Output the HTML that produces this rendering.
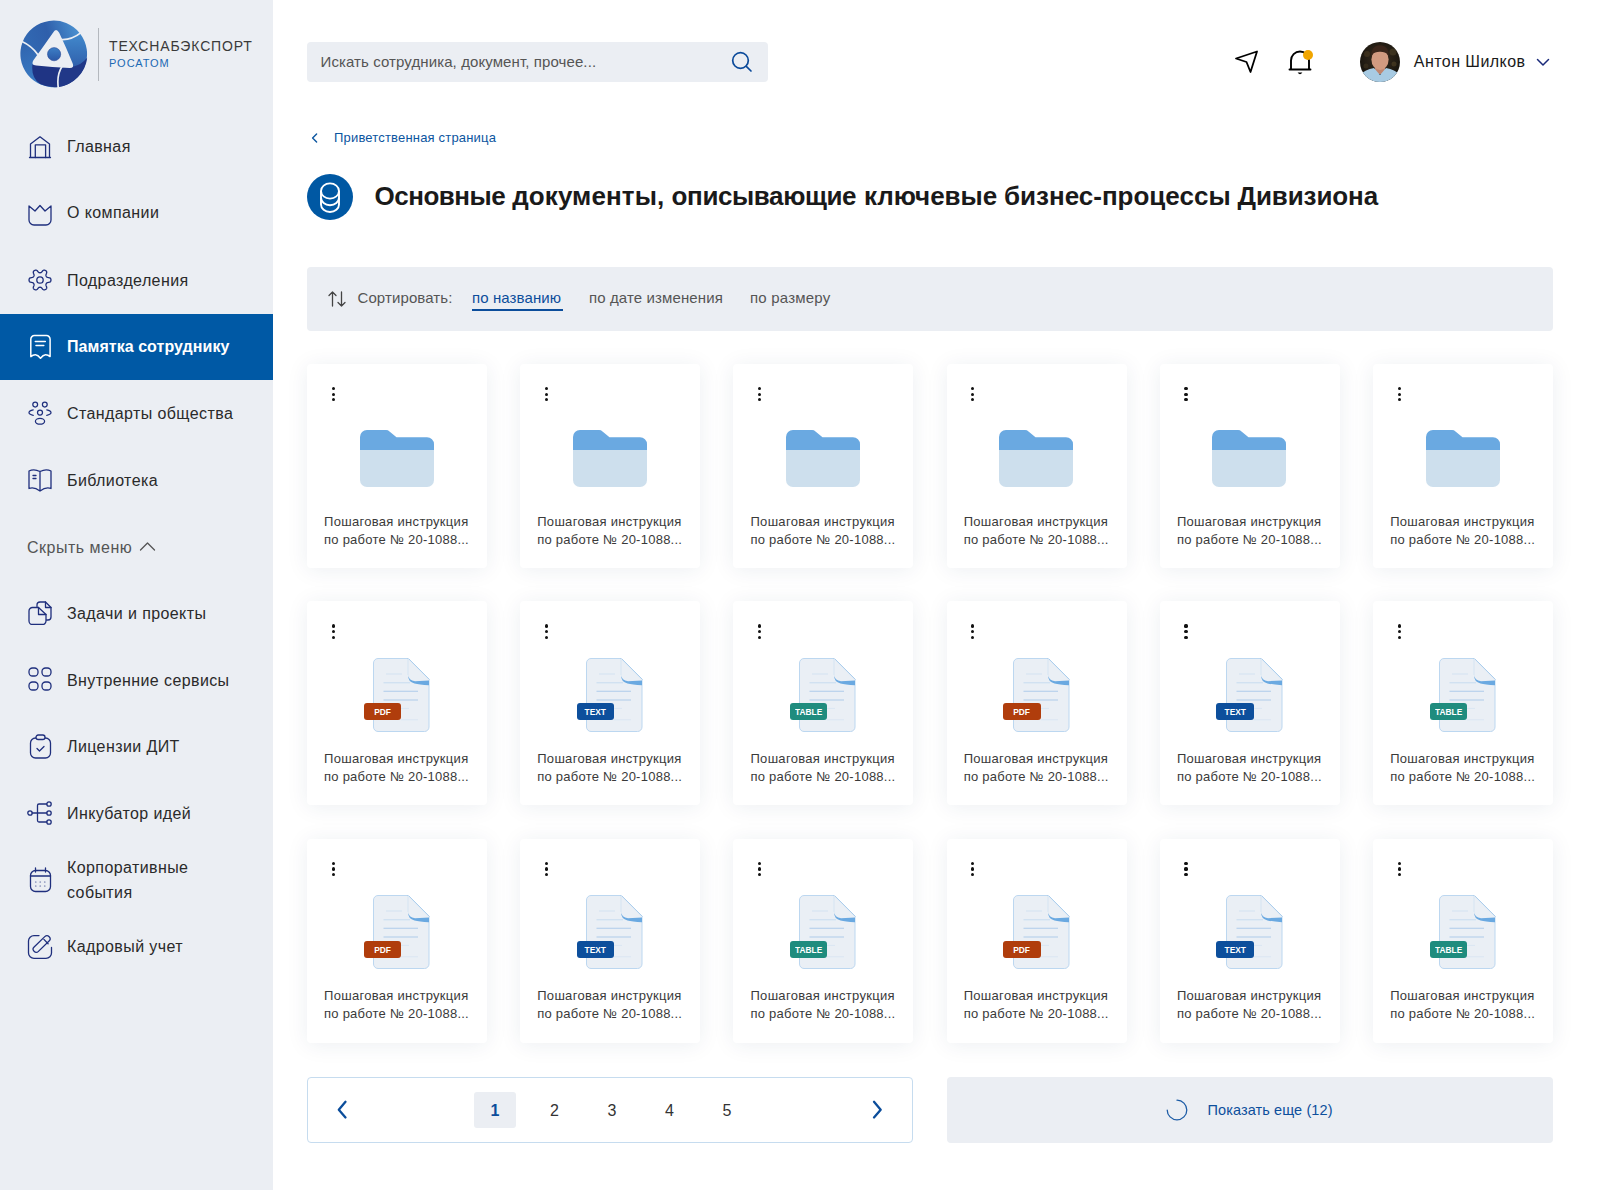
<!DOCTYPE html>
<html lang="ru"><head><meta charset="utf-8"><title>Памятка сотруднику</title>
<style>
html,body{margin:0;padding:0}
body{width:1600px;height:1190px;position:relative;overflow:hidden;background:#fff;font-family:"Liberation Sans", sans-serif}
#side{position:absolute;left:0;top:0;width:273px;height:1190px;background:#ebeef3}
.t{position:absolute;white-space:nowrap}
.card{position:absolute;height:204px;background:#fff;border-radius:4px;box-shadow:0 2px 22px rgba(30,50,90,0.08)}
.badge{position:absolute;left:56.5px;top:101.8px;width:37.5px;height:17px;border-radius:3px;text-align:center;line-height:17px}
.badge span{display:inline-block;vertical-align:top;line-height:17px;color:#fff;font-size:9.6px;font-weight:700;transform:scaleX(0.87)}
.dots{position:absolute;left:24.5px;top:23px;width:3px;height:15px}
.dots i{display:block;width:3.2px;height:3.2px;border-radius:50%;background:#111;margin-bottom:2.4px}
</style></head><body>
<div id="side"></div>
<div style="position:absolute;left:0;top:313.5px;width:273px;height:66px;background:#0059a5"></div>
<svg style="position:absolute;left:20.4px;top:20.3px" width="68" height="68" viewBox="-34 -34 68 68">
<defs>
<linearGradient id="ga" x1="0" y1="0.5" x2="1" y2="0.3"><stop offset="0" stop-color="#3169b3"/><stop offset="0.45" stop-color="#2f5fab"/><stop offset="1" stop-color="#4b93d2"/></linearGradient>
<linearGradient id="gb" x1="0" y1="0" x2="0" y2="1"><stop offset="0" stop-color="#428acd"/><stop offset="0.55" stop-color="#3265b0"/><stop offset="1" stop-color="#21388a"/></linearGradient>
<linearGradient id="gc" x1="0" y1="0" x2="0.3" y2="1"><stop offset="0" stop-color="#2f63ae"/><stop offset="1" stop-color="#3b7dc5"/></linearGradient>
<linearGradient id="gi" x1="0" y1="0" x2="0" y2="1"><stop offset="0" stop-color="#3d7fc6"/><stop offset="1" stop-color="#2b58a6"/></linearGradient>
</defs>
<path d="M0 0 L-17 0.7 Q-22 -8 -31.3 -12.3 A33.4 33.4 0 0 1 26 -20.6 Q17 -13.5 7.1 -14.6 Z" fill="url(#ga)"/>
<path d="M0 0 L7.1 -14.6 Q17 -13.5 26 -20.6 A33.4 33.4 0 0 1 4.3 33 Q2.5 21 7.5 13.3 Z" fill="url(#gb)"/>
<path d="M0 0 L7.5 13.3 Q2.5 21 4.3 33 A33.4 33.4 0 0 1 -31.3 -12.3 Q-22 -8 -17 0.7 Z" fill="url(#gc)"/>
<path d="M-21.6 10.4 Q-23 24 -13.9 29.9 A33.4 33.4 0 0 0 4.3 33 Q2.5 21 7.5 13.3 Z" fill="#1f3484"/>
<path d="M7.5 13.3 L19.8 12.5 Q27 11 33.2 3.8 A33.4 33.4 0 0 1 4.3 33 Q2.5 21 7.5 13.3 Z" fill="#213888"/>
<path d="M-1 -21.3 Q2 -26.8 5.2 -21.3 Q12 -7 18.6 9.3 Q20.8 14.2 15.6 14.1 Q-2 13 -17.8 11.4 Q-23.6 11 -20.6 6.3 Q-11 -7 -1 -21.3 Z" fill="#ebeef3"/>
<circle cx="0.1" cy="0.2" r="6.6" fill="url(#gi)" stroke="#233f8f" stroke-width="0.5"/>
<g stroke="#ebeef3" stroke-width="1.7" fill="none">
<path d="M6 -14.6 Q17 -13.5 27 -21.4"/>
<path d="M-16 0.7 Q-22 -8 -32 -12.6"/>
<path d="M8 12.5 Q2.5 21 4.3 34"/>
</g>
</svg>
<div style="position:absolute;left:98px;top:28px;width:1px;height:52.5px;background:#b4b8be"></div>
<div class="t" style="left:109px;top:37.75px;font-size:14px;line-height:16.8px;color:#3a3a3a;font-weight:400;letter-spacing:0.86px;">ТЕХСНАБЭКСПОРТ</div>
<div class="t" style="left:109px;top:56.59px;font-size:11px;line-height:13.2px;color:#1b69b3;font-weight:400;letter-spacing:1.0px;">РОСАТОМ</div>
<div class="t" style="left:67px;top:136.86px;font-size:16px;line-height:19.2px;color:#2a2a2a;font-weight:400;letter-spacing:0.4px;">Главная</div>
<div class="t" style="left:67px;top:203.36px;font-size:16px;line-height:19.2px;color:#2a2a2a;font-weight:400;letter-spacing:0.4px;">О компании</div>
<div class="t" style="left:67px;top:270.86px;font-size:16px;line-height:19.2px;color:#2a2a2a;font-weight:400;letter-spacing:0.4px;">Подразделения</div>
<div class="t" style="left:67px;top:337.36px;font-size:16px;line-height:19.2px;color:#ffffff;font-weight:700;letter-spacing:0.05px;">Памятка сотруднику</div>
<div class="t" style="left:67px;top:403.86px;font-size:16px;line-height:19.2px;color:#2a2a2a;font-weight:400;letter-spacing:0.4px;">Стандарты общества</div>
<div class="t" style="left:67px;top:470.86px;font-size:16px;line-height:19.2px;color:#2a2a2a;font-weight:400;letter-spacing:0.4px;">Библиотека</div>
<div class="t" style="left:67px;top:603.86px;font-size:16px;line-height:19.2px;color:#2a2a2a;font-weight:400;letter-spacing:0.4px;">Задачи и проекты</div>
<div class="t" style="left:67px;top:670.86px;font-size:16px;line-height:19.2px;color:#2a2a2a;font-weight:400;letter-spacing:0.4px;">Внутренние сервисы</div>
<div class="t" style="left:67px;top:737.36px;font-size:16px;line-height:19.2px;color:#2a2a2a;font-weight:400;letter-spacing:0.4px;">Лицензии ДИТ</div>
<div class="t" style="left:67px;top:803.86px;font-size:16px;line-height:19.2px;color:#2a2a2a;font-weight:400;letter-spacing:0.4px;">Инкубатор идей</div>
<div class="t" style="left:67px;top:857.86px;font-size:16px;line-height:19.2px;color:#2a2a2a;font-weight:400;letter-spacing:0.4px;">Корпоративные</div>
<div class="t" style="left:67px;top:882.86px;font-size:16px;line-height:19.2px;color:#2a2a2a;font-weight:400;letter-spacing:0.4px;">события</div>
<div class="t" style="left:67px;top:936.86px;font-size:16px;line-height:19.2px;color:#2a2a2a;font-weight:400;letter-spacing:0.4px;">Кадровый учет</div>
<svg style="position:absolute;left:28px;top:135px" width="24" height="24" viewBox="0 0 24 24" fill="none" stroke="#1f2f7d" stroke-width="1.3" stroke-linecap="round" stroke-linejoin="round"><path d="M1.5 22.5 H22.5 M2.5 22.5 V9 L12 1.8 L21.5 9 V22.5" /><path d="M7.3 22.5 V9.8 H17.6 V22.5"/></svg>
<svg style="position:absolute;left:28px;top:203px" width="24" height="24" viewBox="0 0 24 24" fill="none" stroke="#1f2f7d" stroke-width="1.3" stroke-linecap="round" stroke-linejoin="round"><path d="M1 3 L7 8 L12 2.5 L17 8 L23 3 V17 A5 5 0 0 1 18 22 H6 A5 5 0 0 1 1 17 Z"/></svg>
<svg style="position:absolute;left:27.9px;top:267.6px" width="24" height="24" viewBox="0 0 24 24" fill="none" stroke="#1f2f7d" stroke-width="1.3" stroke-linecap="round" stroke-linejoin="round"><path d="M22.95 12.00 L22.94 12.29 L22.91 12.57 L22.85 12.85 L22.77 13.13 L22.64 13.40 L22.45 13.65 L22.17 13.89 L21.80 14.08 L21.33 14.24 L20.79 14.36 L20.25 14.44 L19.78 14.53 L19.40 14.62 L19.12 14.73 L18.90 14.86 L18.74 15.00 L18.60 15.15 L18.48 15.30 L18.38 15.46 L18.28 15.62 L18.19 15.79 L18.10 15.96 L18.03 16.14 L17.97 16.33 L17.93 16.55 L17.92 16.80 L17.97 17.10 L18.08 17.47 L18.24 17.93 L18.43 18.43 L18.60 18.96 L18.70 19.45 L18.72 19.87 L18.66 20.22 L18.53 20.51 L18.36 20.76 L18.17 20.97 L17.95 21.16 L17.72 21.33 L17.48 21.48 L17.22 21.62 L16.96 21.73 L16.69 21.83 L16.40 21.89 L16.11 21.91 L15.79 21.87 L15.45 21.75 L15.10 21.53 L14.72 21.20 L14.36 20.79 L14.01 20.37 L13.70 20.00 L13.43 19.72 L13.19 19.53 L12.98 19.41 L12.77 19.33 L12.57 19.29 L12.38 19.27 L12.19 19.25 L12.00 19.25 L11.81 19.25 L11.62 19.27 L11.43 19.29 L11.23 19.33 L11.02 19.41 L10.81 19.53 L10.57 19.72 L10.30 20.00 L9.99 20.37 L9.64 20.79 L9.28 21.20 L8.90 21.53 L8.55 21.75 L8.21 21.87 L7.89 21.91 L7.60 21.89 L7.31 21.83 L7.04 21.73 L6.78 21.62 L6.53 21.48 L6.28 21.33 L6.05 21.16 L5.83 20.97 L5.64 20.76 L5.47 20.51 L5.34 20.22 L5.28 19.87 L5.30 19.45 L5.40 18.96 L5.57 18.43 L5.76 17.93 L5.92 17.47 L6.03 17.10 L6.08 16.80 L6.07 16.55 L6.03 16.33 L5.97 16.14 L5.90 15.96 L5.81 15.79 L5.72 15.62 L5.62 15.46 L5.52 15.30 L5.40 15.15 L5.26 15.00 L5.10 14.86 L4.88 14.73 L4.60 14.62 L4.22 14.53 L3.75 14.44 L3.21 14.36 L2.67 14.24 L2.20 14.08 L1.83 13.89 L1.55 13.65 L1.36 13.40 L1.23 13.13 L1.15 12.85 L1.09 12.57 L1.06 12.29 L1.05 12.00 L1.06 11.71 L1.09 11.43 L1.15 11.15 L1.23 10.87 L1.36 10.60 L1.55 10.35 L1.83 10.11 L2.20 9.92 L2.67 9.76 L3.21 9.64 L3.75 9.56 L4.22 9.47 L4.60 9.38 L4.88 9.27 L5.10 9.14 L5.26 9.00 L5.40 8.85 L5.52 8.70 L5.62 8.54 L5.72 8.38 L5.81 8.21 L5.90 8.04 L5.97 7.86 L6.03 7.67 L6.07 7.45 L6.08 7.20 L6.03 6.90 L5.92 6.53 L5.76 6.07 L5.57 5.57 L5.40 5.04 L5.30 4.55 L5.28 4.13 L5.34 3.78 L5.47 3.49 L5.64 3.24 L5.83 3.03 L6.05 2.84 L6.28 2.67 L6.52 2.52 L6.78 2.38 L7.04 2.27 L7.31 2.17 L7.60 2.11 L7.89 2.09 L8.21 2.13 L8.55 2.25 L8.90 2.47 L9.28 2.80 L9.64 3.21 L9.99 3.63 L10.30 4.00 L10.57 4.28 L10.81 4.47 L11.02 4.59 L11.23 4.67 L11.43 4.71 L11.62 4.73 L11.81 4.75 L12.00 4.75 L12.19 4.75 L12.38 4.73 L12.57 4.71 L12.77 4.67 L12.98 4.59 L13.19 4.47 L13.43 4.28 L13.70 4.00 L14.01 3.63 L14.36 3.21 L14.72 2.80 L15.10 2.47 L15.45 2.25 L15.79 2.13 L16.11 2.09 L16.40 2.11 L16.69 2.17 L16.96 2.27 L17.22 2.38 L17.48 2.52 L17.72 2.67 L17.95 2.84 L18.17 3.03 L18.36 3.24 L18.53 3.49 L18.66 3.78 L18.72 4.13 L18.70 4.55 L18.60 5.04 L18.43 5.57 L18.24 6.07 L18.08 6.53 L17.97 6.90 L17.92 7.20 L17.93 7.45 L17.97 7.67 L18.03 7.86 L18.10 8.04 L18.19 8.21 L18.28 8.38 L18.38 8.54 L18.48 8.70 L18.60 8.85 L18.74 9.00 L18.90 9.14 L19.12 9.27 L19.40 9.38 L19.78 9.47 L20.25 9.56 L20.79 9.64 L21.33 9.76 L21.80 9.92 L22.17 10.11 L22.45 10.35 L22.64 10.60 L22.77 10.87 L22.85 11.15 L22.91 11.43 L22.94 11.71 L22.95 12.00 Z"/><circle cx="12" cy="12" r="3.2"/></svg>
<svg style="position:absolute;left:29px;top:334px" width="24" height="26" viewBox="0 0 24 26" fill="none" stroke="#ffffff" stroke-width="1.5" stroke-linecap="round" stroke-linejoin="round"><path d="M1.8 5.2 A3.6 3.6 0 0 1 5.4 1.6 H17.5 A3.6 3.6 0 0 1 21.1 5.2 V22.6 Q19 20.6 16.5 20.7 Q14 20.9 11.5 24.3 Q9 20.9 6.5 20.7 Q4 20.6 1.8 22.6 Z"/><path d="M6.3 7.4 H16.3 M7 11.4 H14.8"/></svg>
<svg style="position:absolute;left:28px;top:401px" width="24" height="24" viewBox="0 0 24 24" fill="none" stroke="#1f2f7d" stroke-width="1.25" stroke-linecap="round" stroke-linejoin="round"><circle cx="7.2" cy="3.6" r="2.4"/><circle cx="16.8" cy="3.6" r="2.4"/><circle cx="12" cy="11.6" r="2.5"/><path d="M5.2 8.8 Q1 9.6 1 11.6 Q1 13.6 5.2 14.4 M18.8 8.8 Q23 9.6 23 11.6 Q23 13.6 18.8 14.4"/><ellipse cx="12" cy="20.3" rx="4.6" ry="2.9"/></svg>
<svg style="position:absolute;left:28px;top:468px" width="24" height="24" viewBox="0 0 24 24" fill="none" stroke="#1f2f7d" stroke-width="1.3" stroke-linecap="round" stroke-linejoin="round"><path d="M1 3 Q6 0.5 12 3.5 Q18 0.5 23 3 V20.5 Q18 18.5 12 23 Q6 18.5 1 20.5 Z M12 3.5 V23"/><path d="M5 7.5 H8 M5 10.5 H8"/></svg>
<div class="t" style="left:27px;top:537.86px;font-size:16px;line-height:19.2px;color:#555;font-weight:400;letter-spacing:0.5px;">Скрыть меню</div>
<svg style="position:absolute;left:139px;top:541px" width="17" height="11" viewBox="0 0 17 11" fill="none" stroke="#555" stroke-width="1.3" stroke-linecap="round" stroke-linejoin="round"><path d="M1.5 9 L8.5 2 L15.5 9"/></svg>
<svg style="position:absolute;left:28px;top:601px" width="24" height="24" viewBox="0 0 24 24" fill="none" stroke="#1f2f7d" stroke-width="1.3" stroke-linecap="round" stroke-linejoin="round"><path d="M9 5.5 L9 4 A3 3 0 0 1 12 1 H17.5 L23 6.5 V16 A3 3 0 0 1 20 19 H18.5"/><path d="M17.5 1 V6.5 H23"/><path d="M1 10 A3.5 3.5 0 0 1 4.5 6.5 H10.5 L18 13.5 V20 A3.5 3.5 0 0 1 14.5 23.5 H4.5 A3.5 3.5 0 0 1 1 20 Z"/><path d="M10.5 6.5 V13.5 H18"/></svg>
<svg style="position:absolute;left:28px;top:667px" width="24" height="24" viewBox="0 0 24 24" fill="none" stroke="#1f2f7d" stroke-width="1.3" stroke-linecap="round" stroke-linejoin="round"><rect x="1" y="1" width="9" height="8" rx="3.5"/><rect x="14" y="1" width="9" height="8" rx="3.5"/><rect x="1" y="15" width="9" height="8" rx="3.5"/><rect x="14" y="15" width="9" height="8" rx="3.5"/></svg>
<svg style="position:absolute;left:29px;top:734px" width="24" height="25" viewBox="0 0 24 25" fill="none" stroke="#1f2f7d" stroke-width="1.3" stroke-linecap="round" stroke-linejoin="round"><rect x="1.5" y="4" width="20" height="20" rx="5"/><rect x="7" y="1" width="9" height="4.5" rx="2.2" fill="#ebeef3"/><path d="M8 14.5 L10.5 17 L15 12.5"/></svg>
<svg style="position:absolute;left:27px;top:801px" width="26" height="24" viewBox="0 0 26 24" fill="none" stroke="#1f2f7d" stroke-width="1.3" stroke-linecap="round" stroke-linejoin="round"><circle cx="3" cy="12" r="2.2"/><circle cx="22" cy="3" r="2.2"/><circle cx="22" cy="12" r="2.2"/><circle cx="22" cy="21" r="2.2"/><path d="M5.2 12 H19.8 M19.8 3 H12 Q10.5 3 10.5 4.5 V19.5 Q10.5 21 12 21 H19.8"/></svg>
<svg style="position:absolute;left:29px;top:867px" width="24" height="26" viewBox="0 0 24 26" fill="none" stroke="#1f2f7d" stroke-width="1.3" stroke-linecap="round" stroke-linejoin="round"><rect x="1.5" y="3.5" width="20" height="21" rx="5"/><path d="M6.5 1 V5 M16.5 1 V5 M1.5 9 H21.5"/><path d="M6.5 15 H7 M11 15 H11.5 M15.5 15 H16 M6.5 19 H7 M11 19 H11.5 M15.5 19 H16" stroke-width="1.2" opacity="0.7"/></svg>
<svg style="position:absolute;left:27px;top:934px" width="26" height="26" viewBox="0 0 26 26" fill="none" stroke="#1f2f7d" stroke-width="1.3" stroke-linecap="round" stroke-linejoin="round"><path d="M12 1.6 H7 A5.5 5.5 0 0 0 1.5 7.1 V18.9 A5.5 5.5 0 0 0 7 24.4 H19 A5.5 5.5 0 0 0 24.5 18.9 V13.5"/><rect x="4.1" y="6.9" width="21" height="6.2" rx="3.1" transform="rotate(-44 14.6 10)"/><path d="M16.9 5.4 L21.1 9.8"/></svg>
<div style="position:absolute;left:307px;top:41.5px;width:461px;height:40px;background:#ebeef3;border-radius:4px"></div>
<div class="t" style="left:320.5px;top:52.80px;font-size:15px;line-height:18.0px;color:#555;font-weight:400;letter-spacing:0.1px;">Искать сотрудника, документ, прочее...</div>
<svg style="position:absolute;left:730px;top:50px" width="24" height="24" viewBox="0 0 24 24" fill="none" stroke="#0b4a9a" stroke-width="1.7" stroke-linecap="round" stroke-linejoin="round"><circle cx="10.5" cy="10.5" r="7.8"/><path d="M16.3 16.3 L21 21"/></svg>
<svg style="position:absolute;left:1233px;top:48px" width="28" height="28" viewBox="0 0 28 28" fill="none" stroke="#000" stroke-width="1.8" stroke-linecap="round" stroke-linejoin="round"><path d="M3 10.5 L24 3.5 L17.5 24 L13.5 14 Z"/></svg>
<svg style="position:absolute;left:1286px;top:48px" width="28" height="30" viewBox="0 0 28 30" fill="none" stroke="#000" stroke-width="1.9" stroke-linecap="round" stroke-linejoin="round"><path d="M5 21.5 V12.5 A9 9 0 0 1 23 12.5 V21.5 M3.5 21.5 H24.5"/><path d="M11.6 24.6 Q14 28 16.4 24.6 Z" fill="#000" stroke="none"/></svg>
<div style="position:absolute;left:1303px;top:49.5px;width:10px;height:10px;border-radius:50%;background:#f0a500"></div>
<svg style="position:absolute;left:1360px;top:42px" width="40" height="40" viewBox="0 0 40 40">
<defs><clipPath id="av"><circle cx="20" cy="20" r="20"/></clipPath>
<radialGradient id="bg" cx="0.5" cy="0.4" r="0.6"><stop offset="0" stop-color="#3a2e20"/><stop offset="1" stop-color="#15120c"/></radialGradient></defs>
<g clip-path="url(#av)">
<rect width="40" height="40" fill="url(#bg)"/>
<circle cx="7" cy="12" r="3" fill="#4a3a22" opacity="0.6"/><circle cx="33" cy="10" r="3.5" fill="#4d4128" opacity="0.6"/><circle cx="34" cy="22" r="2.5" fill="#5a4a2a" opacity="0.5"/><circle cx="6" cy="24" r="2.5" fill="#3f3320" opacity="0.6"/>
<rect x="15" y="22" width="10" height="10" fill="#c08670"/>
<ellipse cx="20" cy="17.5" rx="8.6" ry="10.6" fill="#d29a80"/>
<path d="M11.2 16 Q10.5 3.5 20 3.2 Q29.5 3.5 28.8 16 Q28 9.5 20 9.8 Q12 9.5 11.2 16 Z" fill="#3b261b"/>
<path d="M0 33 Q5 27.5 14 26 L20 33 L26 26 Q35 27.5 40 33 V40 H0 Z" fill="#a8cbe3"/>
</g></svg>
<div class="t" style="left:1413.8px;top:51.86px;font-size:16px;line-height:19.2px;color:#1a1a1a;font-weight:400;letter-spacing:0.45px;">Антон Шилков</div>
<svg style="position:absolute;left:1535px;top:56px" width="16" height="12" viewBox="0 0 16 12" fill="none" stroke="#1a2a7a" stroke-width="1.5" stroke-linecap="round" stroke-linejoin="round"><path d="M2.5 3.5 L8 9 L13.5 3.5"/></svg>
<svg style="position:absolute;left:309px;top:132px" width="10" height="12" viewBox="0 0 10 12" fill="none" stroke="#0b55a0" stroke-width="1.4" stroke-linecap="round" stroke-linejoin="round"><path d="M7.6 2 L3.6 6 L7.6 10"/></svg>
<div class="t" style="left:334px;top:129.70px;font-size:13px;line-height:15.6px;color:#0b55a0;font-weight:400;letter-spacing:0.18px;">Приветственная страница</div>
<svg style="position:absolute;left:307px;top:173.5px" width="46" height="46" viewBox="0 0 46 46">
<circle cx="23" cy="23" r="23" fill="#0058a3"/>
<g fill="none" stroke="#fff" stroke-width="1.9">
<ellipse cx="23" cy="17" rx="9" ry="7.6"/>
<path d="M14 17 V30.4 A9 7.6 0 0 0 32 30.4 V17"/>
<path d="M14 23.6 A9 7.6 0 0 0 32 23.6"/>
</g></svg>
<div class="t" style="left:374.5px;top:180.89px;font-size:26px;line-height:31.2px;color:#1a1a1a;font-weight:700;letter-spacing:-0.5px;">Основные</div>
<div class="t" style="left:512.2px;top:180.89px;font-size:26px;line-height:31.2px;color:#1a1a1a;font-weight:700;letter-spacing:0.1px;">документы,</div>
<div class="t" style="left:671.6px;top:180.89px;font-size:26px;line-height:31.2px;color:#1a1a1a;font-weight:700;letter-spacing:-0.4px;">описывающие</div>
<div class="t" style="left:864px;top:180.89px;font-size:26px;line-height:31.2px;color:#1a1a1a;font-weight:700;letter-spacing:0px;">ключевые</div>
<div class="t" style="left:1004px;top:180.89px;font-size:26px;line-height:31.2px;color:#1a1a1a;font-weight:700;letter-spacing:0px;">бизнес-процессы</div>
<div class="t" style="left:1237.5px;top:180.89px;font-size:26px;line-height:31.2px;color:#1a1a1a;font-weight:700;letter-spacing:-0.1px;">Дивизиона</div>
<div style="position:absolute;left:307px;top:266.5px;width:1246px;height:64px;background:#ebeef3;border-radius:4px"></div>
<svg style="position:absolute;left:326px;top:290px" width="22" height="18" viewBox="0 0 22 18" fill="none" stroke="#444" stroke-width="1.3" stroke-linecap="round" stroke-linejoin="round"><path d="M6.5 2 V16 M3 5.5 L6.5 2 L10 5.5 M15.5 2 V16 M12 12.5 L15.5 16 L19 12.5"/></svg>
<div class="t" style="left:357.5px;top:289.30px;font-size:15px;line-height:18.0px;color:#555;font-weight:400;letter-spacing:0.1px;">Сортировать:</div>
<div class="t" style="left:472px;top:289.30px;font-size:15px;line-height:18.0px;color:#0b4d9b;font-weight:400;letter-spacing:0.1px;">по названию</div>
<div style="position:absolute;left:472px;top:309.4px;width:90.5px;height:1.4px;background:#0b4d9b"></div>
<div class="t" style="left:589px;top:289.30px;font-size:15px;line-height:18.0px;color:#555;font-weight:400;letter-spacing:0.12px;">по дате изменения</div>
<div class="t" style="left:750px;top:289.30px;font-size:15px;line-height:18.0px;color:#555;font-weight:400;letter-spacing:0.2px;">по размеру</div>
<div class="card" style="left:307.000px;top:364.00px;width:179.833px"><div class="dots"><i></i><i></i><i></i></div><svg style="position:absolute;left:52.5px;top:66px" width="74" height="57" viewBox="0 0 74 57">
<path d="M0 20 H74 V50 A7 7 0 0 1 67 57 H7 A7 7 0 0 1 0 50 Z" fill="#cddfed"/>
<path d="M0 7 A7 7 0 0 1 7 0 H26 A5 5 0 0 1 29.5 1.4 L36.5 7.3 H67 A7 7 0 0 1 74 14.3 V20 H0 Z" fill="#6aa9e1"/>
</svg><div class="t" style="left:17px;top:149.70px;font-size:13px;line-height:15.6px;color:#3a3a3a;font-weight:400;letter-spacing:0.3px;">Пошаговая инструкция</div><div class="t" style="left:17px;top:167.70px;font-size:13px;line-height:15.6px;color:#3a3a3a;font-weight:400;letter-spacing:0.25px;">по работе № 20-1088...</div></div>
<div class="card" style="left:520.233px;top:364.00px;width:179.833px"><div class="dots"><i></i><i></i><i></i></div><svg style="position:absolute;left:52.5px;top:66px" width="74" height="57" viewBox="0 0 74 57">
<path d="M0 20 H74 V50 A7 7 0 0 1 67 57 H7 A7 7 0 0 1 0 50 Z" fill="#cddfed"/>
<path d="M0 7 A7 7 0 0 1 7 0 H26 A5 5 0 0 1 29.5 1.4 L36.5 7.3 H67 A7 7 0 0 1 74 14.3 V20 H0 Z" fill="#6aa9e1"/>
</svg><div class="t" style="left:17px;top:149.70px;font-size:13px;line-height:15.6px;color:#3a3a3a;font-weight:400;letter-spacing:0.3px;">Пошаговая инструкция</div><div class="t" style="left:17px;top:167.70px;font-size:13px;line-height:15.6px;color:#3a3a3a;font-weight:400;letter-spacing:0.25px;">по работе № 20-1088...</div></div>
<div class="card" style="left:733.467px;top:364.00px;width:179.833px"><div class="dots"><i></i><i></i><i></i></div><svg style="position:absolute;left:52.5px;top:66px" width="74" height="57" viewBox="0 0 74 57">
<path d="M0 20 H74 V50 A7 7 0 0 1 67 57 H7 A7 7 0 0 1 0 50 Z" fill="#cddfed"/>
<path d="M0 7 A7 7 0 0 1 7 0 H26 A5 5 0 0 1 29.5 1.4 L36.5 7.3 H67 A7 7 0 0 1 74 14.3 V20 H0 Z" fill="#6aa9e1"/>
</svg><div class="t" style="left:17px;top:149.70px;font-size:13px;line-height:15.6px;color:#3a3a3a;font-weight:400;letter-spacing:0.3px;">Пошаговая инструкция</div><div class="t" style="left:17px;top:167.70px;font-size:13px;line-height:15.6px;color:#3a3a3a;font-weight:400;letter-spacing:0.25px;">по работе № 20-1088...</div></div>
<div class="card" style="left:946.700px;top:364.00px;width:179.833px"><div class="dots"><i></i><i></i><i></i></div><svg style="position:absolute;left:52.5px;top:66px" width="74" height="57" viewBox="0 0 74 57">
<path d="M0 20 H74 V50 A7 7 0 0 1 67 57 H7 A7 7 0 0 1 0 50 Z" fill="#cddfed"/>
<path d="M0 7 A7 7 0 0 1 7 0 H26 A5 5 0 0 1 29.5 1.4 L36.5 7.3 H67 A7 7 0 0 1 74 14.3 V20 H0 Z" fill="#6aa9e1"/>
</svg><div class="t" style="left:17px;top:149.70px;font-size:13px;line-height:15.6px;color:#3a3a3a;font-weight:400;letter-spacing:0.3px;">Пошаговая инструкция</div><div class="t" style="left:17px;top:167.70px;font-size:13px;line-height:15.6px;color:#3a3a3a;font-weight:400;letter-spacing:0.25px;">по работе № 20-1088...</div></div>
<div class="card" style="left:1159.933px;top:364.00px;width:179.833px"><div class="dots"><i></i><i></i><i></i></div><svg style="position:absolute;left:52.5px;top:66px" width="74" height="57" viewBox="0 0 74 57">
<path d="M0 20 H74 V50 A7 7 0 0 1 67 57 H7 A7 7 0 0 1 0 50 Z" fill="#cddfed"/>
<path d="M0 7 A7 7 0 0 1 7 0 H26 A5 5 0 0 1 29.5 1.4 L36.5 7.3 H67 A7 7 0 0 1 74 14.3 V20 H0 Z" fill="#6aa9e1"/>
</svg><div class="t" style="left:17px;top:149.70px;font-size:13px;line-height:15.6px;color:#3a3a3a;font-weight:400;letter-spacing:0.3px;">Пошаговая инструкция</div><div class="t" style="left:17px;top:167.70px;font-size:13px;line-height:15.6px;color:#3a3a3a;font-weight:400;letter-spacing:0.25px;">по работе № 20-1088...</div></div>
<div class="card" style="left:1373.167px;top:364.00px;width:179.833px"><div class="dots"><i></i><i></i><i></i></div><svg style="position:absolute;left:52.5px;top:66px" width="74" height="57" viewBox="0 0 74 57">
<path d="M0 20 H74 V50 A7 7 0 0 1 67 57 H7 A7 7 0 0 1 0 50 Z" fill="#cddfed"/>
<path d="M0 7 A7 7 0 0 1 7 0 H26 A5 5 0 0 1 29.5 1.4 L36.5 7.3 H67 A7 7 0 0 1 74 14.3 V20 H0 Z" fill="#6aa9e1"/>
</svg><div class="t" style="left:17px;top:149.70px;font-size:13px;line-height:15.6px;color:#3a3a3a;font-weight:400;letter-spacing:0.3px;">Пошаговая инструкция</div><div class="t" style="left:17px;top:167.70px;font-size:13px;line-height:15.6px;color:#3a3a3a;font-weight:400;letter-spacing:0.25px;">по работе № 20-1088...</div></div>
<div class="card" style="left:307.000px;top:601.40px;width:179.833px"><div class="dots"><i></i><i></i><i></i></div><svg style="position:absolute;left:66px;top:56.5px" width="58" height="75" viewBox="0 0 58 75">
<path d="M0.5 5 A4.5 4.5 0 0 1 5 0.5 H35 L56 21.5 V69 A4.5 4.5 0 0 1 51.5 73.5 H5 A4.5 4.5 0 0 1 0.5 69 Z" fill="#eaeff5" stroke="#bcd7f0" stroke-width="1"/>
<path d="M35 0.5 L56 21.5" stroke="#6aa9e1" stroke-width="1"/>
<path d="M35 0.5 V17 Q35.5 22.5 42 23.2 L56 22.6 V21.5 Z" fill="#eaeff5"/>
<path d="M35 0.5 V17" stroke="#d5e4f2" stroke-width="1"/>
<path d="M35 17 Q35.5 22.5 42 23.2 L56 22.6 V27.2 Q46 26.4 41.5 25.4 Q35 24 35 17 Z" fill="#6aa9e1"/>
<path d="M13 16 H29" stroke="#d3e2f1" stroke-width="1"/>
<path d="M10.5 24.8 H37" stroke="#c6dcf0" stroke-width="1"/>
<path d="M10.5 33.2 H45 M10.5 42 H45" stroke="#aecbea" stroke-width="1.15"/>
<path d="M28 50.4 H36 M28 61.8 H45" stroke="#dae6f3" stroke-width="1"/>
</svg>
<div class="badge" style="background:#b03d0c"><span>PDF</span></div><div class="t" style="left:17px;top:149.70px;font-size:13px;line-height:15.6px;color:#3a3a3a;font-weight:400;letter-spacing:0.3px;">Пошаговая инструкция</div><div class="t" style="left:17px;top:167.70px;font-size:13px;line-height:15.6px;color:#3a3a3a;font-weight:400;letter-spacing:0.25px;">по работе № 20-1088...</div></div>
<div class="card" style="left:520.233px;top:601.40px;width:179.833px"><div class="dots"><i></i><i></i><i></i></div><svg style="position:absolute;left:66px;top:56.5px" width="58" height="75" viewBox="0 0 58 75">
<path d="M0.5 5 A4.5 4.5 0 0 1 5 0.5 H35 L56 21.5 V69 A4.5 4.5 0 0 1 51.5 73.5 H5 A4.5 4.5 0 0 1 0.5 69 Z" fill="#eaeff5" stroke="#bcd7f0" stroke-width="1"/>
<path d="M35 0.5 L56 21.5" stroke="#6aa9e1" stroke-width="1"/>
<path d="M35 0.5 V17 Q35.5 22.5 42 23.2 L56 22.6 V21.5 Z" fill="#eaeff5"/>
<path d="M35 0.5 V17" stroke="#d5e4f2" stroke-width="1"/>
<path d="M35 17 Q35.5 22.5 42 23.2 L56 22.6 V27.2 Q46 26.4 41.5 25.4 Q35 24 35 17 Z" fill="#6aa9e1"/>
<path d="M13 16 H29" stroke="#d3e2f1" stroke-width="1"/>
<path d="M10.5 24.8 H37" stroke="#c6dcf0" stroke-width="1"/>
<path d="M10.5 33.2 H45 M10.5 42 H45" stroke="#aecbea" stroke-width="1.15"/>
<path d="M28 50.4 H36 M28 61.8 H45" stroke="#dae6f3" stroke-width="1"/>
</svg>
<div class="badge" style="background:#0d4f9c"><span>TEXT</span></div><div class="t" style="left:17px;top:149.70px;font-size:13px;line-height:15.6px;color:#3a3a3a;font-weight:400;letter-spacing:0.3px;">Пошаговая инструкция</div><div class="t" style="left:17px;top:167.70px;font-size:13px;line-height:15.6px;color:#3a3a3a;font-weight:400;letter-spacing:0.25px;">по работе № 20-1088...</div></div>
<div class="card" style="left:733.467px;top:601.40px;width:179.833px"><div class="dots"><i></i><i></i><i></i></div><svg style="position:absolute;left:66px;top:56.5px" width="58" height="75" viewBox="0 0 58 75">
<path d="M0.5 5 A4.5 4.5 0 0 1 5 0.5 H35 L56 21.5 V69 A4.5 4.5 0 0 1 51.5 73.5 H5 A4.5 4.5 0 0 1 0.5 69 Z" fill="#eaeff5" stroke="#bcd7f0" stroke-width="1"/>
<path d="M35 0.5 L56 21.5" stroke="#6aa9e1" stroke-width="1"/>
<path d="M35 0.5 V17 Q35.5 22.5 42 23.2 L56 22.6 V21.5 Z" fill="#eaeff5"/>
<path d="M35 0.5 V17" stroke="#d5e4f2" stroke-width="1"/>
<path d="M35 17 Q35.5 22.5 42 23.2 L56 22.6 V27.2 Q46 26.4 41.5 25.4 Q35 24 35 17 Z" fill="#6aa9e1"/>
<path d="M13 16 H29" stroke="#d3e2f1" stroke-width="1"/>
<path d="M10.5 24.8 H37" stroke="#c6dcf0" stroke-width="1"/>
<path d="M10.5 33.2 H45 M10.5 42 H45" stroke="#aecbea" stroke-width="1.15"/>
<path d="M28 50.4 H36 M28 61.8 H45" stroke="#dae6f3" stroke-width="1"/>
</svg>
<div class="badge" style="background:#1f8c7e"><span>TABLE</span></div><div class="t" style="left:17px;top:149.70px;font-size:13px;line-height:15.6px;color:#3a3a3a;font-weight:400;letter-spacing:0.3px;">Пошаговая инструкция</div><div class="t" style="left:17px;top:167.70px;font-size:13px;line-height:15.6px;color:#3a3a3a;font-weight:400;letter-spacing:0.25px;">по работе № 20-1088...</div></div>
<div class="card" style="left:946.700px;top:601.40px;width:179.833px"><div class="dots"><i></i><i></i><i></i></div><svg style="position:absolute;left:66px;top:56.5px" width="58" height="75" viewBox="0 0 58 75">
<path d="M0.5 5 A4.5 4.5 0 0 1 5 0.5 H35 L56 21.5 V69 A4.5 4.5 0 0 1 51.5 73.5 H5 A4.5 4.5 0 0 1 0.5 69 Z" fill="#eaeff5" stroke="#bcd7f0" stroke-width="1"/>
<path d="M35 0.5 L56 21.5" stroke="#6aa9e1" stroke-width="1"/>
<path d="M35 0.5 V17 Q35.5 22.5 42 23.2 L56 22.6 V21.5 Z" fill="#eaeff5"/>
<path d="M35 0.5 V17" stroke="#d5e4f2" stroke-width="1"/>
<path d="M35 17 Q35.5 22.5 42 23.2 L56 22.6 V27.2 Q46 26.4 41.5 25.4 Q35 24 35 17 Z" fill="#6aa9e1"/>
<path d="M13 16 H29" stroke="#d3e2f1" stroke-width="1"/>
<path d="M10.5 24.8 H37" stroke="#c6dcf0" stroke-width="1"/>
<path d="M10.5 33.2 H45 M10.5 42 H45" stroke="#aecbea" stroke-width="1.15"/>
<path d="M28 50.4 H36 M28 61.8 H45" stroke="#dae6f3" stroke-width="1"/>
</svg>
<div class="badge" style="background:#b03d0c"><span>PDF</span></div><div class="t" style="left:17px;top:149.70px;font-size:13px;line-height:15.6px;color:#3a3a3a;font-weight:400;letter-spacing:0.3px;">Пошаговая инструкция</div><div class="t" style="left:17px;top:167.70px;font-size:13px;line-height:15.6px;color:#3a3a3a;font-weight:400;letter-spacing:0.25px;">по работе № 20-1088...</div></div>
<div class="card" style="left:1159.933px;top:601.40px;width:179.833px"><div class="dots"><i></i><i></i><i></i></div><svg style="position:absolute;left:66px;top:56.5px" width="58" height="75" viewBox="0 0 58 75">
<path d="M0.5 5 A4.5 4.5 0 0 1 5 0.5 H35 L56 21.5 V69 A4.5 4.5 0 0 1 51.5 73.5 H5 A4.5 4.5 0 0 1 0.5 69 Z" fill="#eaeff5" stroke="#bcd7f0" stroke-width="1"/>
<path d="M35 0.5 L56 21.5" stroke="#6aa9e1" stroke-width="1"/>
<path d="M35 0.5 V17 Q35.5 22.5 42 23.2 L56 22.6 V21.5 Z" fill="#eaeff5"/>
<path d="M35 0.5 V17" stroke="#d5e4f2" stroke-width="1"/>
<path d="M35 17 Q35.5 22.5 42 23.2 L56 22.6 V27.2 Q46 26.4 41.5 25.4 Q35 24 35 17 Z" fill="#6aa9e1"/>
<path d="M13 16 H29" stroke="#d3e2f1" stroke-width="1"/>
<path d="M10.5 24.8 H37" stroke="#c6dcf0" stroke-width="1"/>
<path d="M10.5 33.2 H45 M10.5 42 H45" stroke="#aecbea" stroke-width="1.15"/>
<path d="M28 50.4 H36 M28 61.8 H45" stroke="#dae6f3" stroke-width="1"/>
</svg>
<div class="badge" style="background:#0d4f9c"><span>TEXT</span></div><div class="t" style="left:17px;top:149.70px;font-size:13px;line-height:15.6px;color:#3a3a3a;font-weight:400;letter-spacing:0.3px;">Пошаговая инструкция</div><div class="t" style="left:17px;top:167.70px;font-size:13px;line-height:15.6px;color:#3a3a3a;font-weight:400;letter-spacing:0.25px;">по работе № 20-1088...</div></div>
<div class="card" style="left:1373.167px;top:601.40px;width:179.833px"><div class="dots"><i></i><i></i><i></i></div><svg style="position:absolute;left:66px;top:56.5px" width="58" height="75" viewBox="0 0 58 75">
<path d="M0.5 5 A4.5 4.5 0 0 1 5 0.5 H35 L56 21.5 V69 A4.5 4.5 0 0 1 51.5 73.5 H5 A4.5 4.5 0 0 1 0.5 69 Z" fill="#eaeff5" stroke="#bcd7f0" stroke-width="1"/>
<path d="M35 0.5 L56 21.5" stroke="#6aa9e1" stroke-width="1"/>
<path d="M35 0.5 V17 Q35.5 22.5 42 23.2 L56 22.6 V21.5 Z" fill="#eaeff5"/>
<path d="M35 0.5 V17" stroke="#d5e4f2" stroke-width="1"/>
<path d="M35 17 Q35.5 22.5 42 23.2 L56 22.6 V27.2 Q46 26.4 41.5 25.4 Q35 24 35 17 Z" fill="#6aa9e1"/>
<path d="M13 16 H29" stroke="#d3e2f1" stroke-width="1"/>
<path d="M10.5 24.8 H37" stroke="#c6dcf0" stroke-width="1"/>
<path d="M10.5 33.2 H45 M10.5 42 H45" stroke="#aecbea" stroke-width="1.15"/>
<path d="M28 50.4 H36 M28 61.8 H45" stroke="#dae6f3" stroke-width="1"/>
</svg>
<div class="badge" style="background:#1f8c7e"><span>TABLE</span></div><div class="t" style="left:17px;top:149.70px;font-size:13px;line-height:15.6px;color:#3a3a3a;font-weight:400;letter-spacing:0.3px;">Пошаговая инструкция</div><div class="t" style="left:17px;top:167.70px;font-size:13px;line-height:15.6px;color:#3a3a3a;font-weight:400;letter-spacing:0.25px;">по работе № 20-1088...</div></div>
<div class="card" style="left:307.000px;top:838.80px;width:179.833px"><div class="dots"><i></i><i></i><i></i></div><svg style="position:absolute;left:66px;top:56.5px" width="58" height="75" viewBox="0 0 58 75">
<path d="M0.5 5 A4.5 4.5 0 0 1 5 0.5 H35 L56 21.5 V69 A4.5 4.5 0 0 1 51.5 73.5 H5 A4.5 4.5 0 0 1 0.5 69 Z" fill="#eaeff5" stroke="#bcd7f0" stroke-width="1"/>
<path d="M35 0.5 L56 21.5" stroke="#6aa9e1" stroke-width="1"/>
<path d="M35 0.5 V17 Q35.5 22.5 42 23.2 L56 22.6 V21.5 Z" fill="#eaeff5"/>
<path d="M35 0.5 V17" stroke="#d5e4f2" stroke-width="1"/>
<path d="M35 17 Q35.5 22.5 42 23.2 L56 22.6 V27.2 Q46 26.4 41.5 25.4 Q35 24 35 17 Z" fill="#6aa9e1"/>
<path d="M13 16 H29" stroke="#d3e2f1" stroke-width="1"/>
<path d="M10.5 24.8 H37" stroke="#c6dcf0" stroke-width="1"/>
<path d="M10.5 33.2 H45 M10.5 42 H45" stroke="#aecbea" stroke-width="1.15"/>
<path d="M28 50.4 H36 M28 61.8 H45" stroke="#dae6f3" stroke-width="1"/>
</svg>
<div class="badge" style="background:#b03d0c"><span>PDF</span></div><div class="t" style="left:17px;top:149.70px;font-size:13px;line-height:15.6px;color:#3a3a3a;font-weight:400;letter-spacing:0.3px;">Пошаговая инструкция</div><div class="t" style="left:17px;top:167.70px;font-size:13px;line-height:15.6px;color:#3a3a3a;font-weight:400;letter-spacing:0.25px;">по работе № 20-1088...</div></div>
<div class="card" style="left:520.233px;top:838.80px;width:179.833px"><div class="dots"><i></i><i></i><i></i></div><svg style="position:absolute;left:66px;top:56.5px" width="58" height="75" viewBox="0 0 58 75">
<path d="M0.5 5 A4.5 4.5 0 0 1 5 0.5 H35 L56 21.5 V69 A4.5 4.5 0 0 1 51.5 73.5 H5 A4.5 4.5 0 0 1 0.5 69 Z" fill="#eaeff5" stroke="#bcd7f0" stroke-width="1"/>
<path d="M35 0.5 L56 21.5" stroke="#6aa9e1" stroke-width="1"/>
<path d="M35 0.5 V17 Q35.5 22.5 42 23.2 L56 22.6 V21.5 Z" fill="#eaeff5"/>
<path d="M35 0.5 V17" stroke="#d5e4f2" stroke-width="1"/>
<path d="M35 17 Q35.5 22.5 42 23.2 L56 22.6 V27.2 Q46 26.4 41.5 25.4 Q35 24 35 17 Z" fill="#6aa9e1"/>
<path d="M13 16 H29" stroke="#d3e2f1" stroke-width="1"/>
<path d="M10.5 24.8 H37" stroke="#c6dcf0" stroke-width="1"/>
<path d="M10.5 33.2 H45 M10.5 42 H45" stroke="#aecbea" stroke-width="1.15"/>
<path d="M28 50.4 H36 M28 61.8 H45" stroke="#dae6f3" stroke-width="1"/>
</svg>
<div class="badge" style="background:#0d4f9c"><span>TEXT</span></div><div class="t" style="left:17px;top:149.70px;font-size:13px;line-height:15.6px;color:#3a3a3a;font-weight:400;letter-spacing:0.3px;">Пошаговая инструкция</div><div class="t" style="left:17px;top:167.70px;font-size:13px;line-height:15.6px;color:#3a3a3a;font-weight:400;letter-spacing:0.25px;">по работе № 20-1088...</div></div>
<div class="card" style="left:733.467px;top:838.80px;width:179.833px"><div class="dots"><i></i><i></i><i></i></div><svg style="position:absolute;left:66px;top:56.5px" width="58" height="75" viewBox="0 0 58 75">
<path d="M0.5 5 A4.5 4.5 0 0 1 5 0.5 H35 L56 21.5 V69 A4.5 4.5 0 0 1 51.5 73.5 H5 A4.5 4.5 0 0 1 0.5 69 Z" fill="#eaeff5" stroke="#bcd7f0" stroke-width="1"/>
<path d="M35 0.5 L56 21.5" stroke="#6aa9e1" stroke-width="1"/>
<path d="M35 0.5 V17 Q35.5 22.5 42 23.2 L56 22.6 V21.5 Z" fill="#eaeff5"/>
<path d="M35 0.5 V17" stroke="#d5e4f2" stroke-width="1"/>
<path d="M35 17 Q35.5 22.5 42 23.2 L56 22.6 V27.2 Q46 26.4 41.5 25.4 Q35 24 35 17 Z" fill="#6aa9e1"/>
<path d="M13 16 H29" stroke="#d3e2f1" stroke-width="1"/>
<path d="M10.5 24.8 H37" stroke="#c6dcf0" stroke-width="1"/>
<path d="M10.5 33.2 H45 M10.5 42 H45" stroke="#aecbea" stroke-width="1.15"/>
<path d="M28 50.4 H36 M28 61.8 H45" stroke="#dae6f3" stroke-width="1"/>
</svg>
<div class="badge" style="background:#1f8c7e"><span>TABLE</span></div><div class="t" style="left:17px;top:149.70px;font-size:13px;line-height:15.6px;color:#3a3a3a;font-weight:400;letter-spacing:0.3px;">Пошаговая инструкция</div><div class="t" style="left:17px;top:167.70px;font-size:13px;line-height:15.6px;color:#3a3a3a;font-weight:400;letter-spacing:0.25px;">по работе № 20-1088...</div></div>
<div class="card" style="left:946.700px;top:838.80px;width:179.833px"><div class="dots"><i></i><i></i><i></i></div><svg style="position:absolute;left:66px;top:56.5px" width="58" height="75" viewBox="0 0 58 75">
<path d="M0.5 5 A4.5 4.5 0 0 1 5 0.5 H35 L56 21.5 V69 A4.5 4.5 0 0 1 51.5 73.5 H5 A4.5 4.5 0 0 1 0.5 69 Z" fill="#eaeff5" stroke="#bcd7f0" stroke-width="1"/>
<path d="M35 0.5 L56 21.5" stroke="#6aa9e1" stroke-width="1"/>
<path d="M35 0.5 V17 Q35.5 22.5 42 23.2 L56 22.6 V21.5 Z" fill="#eaeff5"/>
<path d="M35 0.5 V17" stroke="#d5e4f2" stroke-width="1"/>
<path d="M35 17 Q35.5 22.5 42 23.2 L56 22.6 V27.2 Q46 26.4 41.5 25.4 Q35 24 35 17 Z" fill="#6aa9e1"/>
<path d="M13 16 H29" stroke="#d3e2f1" stroke-width="1"/>
<path d="M10.5 24.8 H37" stroke="#c6dcf0" stroke-width="1"/>
<path d="M10.5 33.2 H45 M10.5 42 H45" stroke="#aecbea" stroke-width="1.15"/>
<path d="M28 50.4 H36 M28 61.8 H45" stroke="#dae6f3" stroke-width="1"/>
</svg>
<div class="badge" style="background:#b03d0c"><span>PDF</span></div><div class="t" style="left:17px;top:149.70px;font-size:13px;line-height:15.6px;color:#3a3a3a;font-weight:400;letter-spacing:0.3px;">Пошаговая инструкция</div><div class="t" style="left:17px;top:167.70px;font-size:13px;line-height:15.6px;color:#3a3a3a;font-weight:400;letter-spacing:0.25px;">по работе № 20-1088...</div></div>
<div class="card" style="left:1159.933px;top:838.80px;width:179.833px"><div class="dots"><i></i><i></i><i></i></div><svg style="position:absolute;left:66px;top:56.5px" width="58" height="75" viewBox="0 0 58 75">
<path d="M0.5 5 A4.5 4.5 0 0 1 5 0.5 H35 L56 21.5 V69 A4.5 4.5 0 0 1 51.5 73.5 H5 A4.5 4.5 0 0 1 0.5 69 Z" fill="#eaeff5" stroke="#bcd7f0" stroke-width="1"/>
<path d="M35 0.5 L56 21.5" stroke="#6aa9e1" stroke-width="1"/>
<path d="M35 0.5 V17 Q35.5 22.5 42 23.2 L56 22.6 V21.5 Z" fill="#eaeff5"/>
<path d="M35 0.5 V17" stroke="#d5e4f2" stroke-width="1"/>
<path d="M35 17 Q35.5 22.5 42 23.2 L56 22.6 V27.2 Q46 26.4 41.5 25.4 Q35 24 35 17 Z" fill="#6aa9e1"/>
<path d="M13 16 H29" stroke="#d3e2f1" stroke-width="1"/>
<path d="M10.5 24.8 H37" stroke="#c6dcf0" stroke-width="1"/>
<path d="M10.5 33.2 H45 M10.5 42 H45" stroke="#aecbea" stroke-width="1.15"/>
<path d="M28 50.4 H36 M28 61.8 H45" stroke="#dae6f3" stroke-width="1"/>
</svg>
<div class="badge" style="background:#0d4f9c"><span>TEXT</span></div><div class="t" style="left:17px;top:149.70px;font-size:13px;line-height:15.6px;color:#3a3a3a;font-weight:400;letter-spacing:0.3px;">Пошаговая инструкция</div><div class="t" style="left:17px;top:167.70px;font-size:13px;line-height:15.6px;color:#3a3a3a;font-weight:400;letter-spacing:0.25px;">по работе № 20-1088...</div></div>
<div class="card" style="left:1373.167px;top:838.80px;width:179.833px"><div class="dots"><i></i><i></i><i></i></div><svg style="position:absolute;left:66px;top:56.5px" width="58" height="75" viewBox="0 0 58 75">
<path d="M0.5 5 A4.5 4.5 0 0 1 5 0.5 H35 L56 21.5 V69 A4.5 4.5 0 0 1 51.5 73.5 H5 A4.5 4.5 0 0 1 0.5 69 Z" fill="#eaeff5" stroke="#bcd7f0" stroke-width="1"/>
<path d="M35 0.5 L56 21.5" stroke="#6aa9e1" stroke-width="1"/>
<path d="M35 0.5 V17 Q35.5 22.5 42 23.2 L56 22.6 V21.5 Z" fill="#eaeff5"/>
<path d="M35 0.5 V17" stroke="#d5e4f2" stroke-width="1"/>
<path d="M35 17 Q35.5 22.5 42 23.2 L56 22.6 V27.2 Q46 26.4 41.5 25.4 Q35 24 35 17 Z" fill="#6aa9e1"/>
<path d="M13 16 H29" stroke="#d3e2f1" stroke-width="1"/>
<path d="M10.5 24.8 H37" stroke="#c6dcf0" stroke-width="1"/>
<path d="M10.5 33.2 H45 M10.5 42 H45" stroke="#aecbea" stroke-width="1.15"/>
<path d="M28 50.4 H36 M28 61.8 H45" stroke="#dae6f3" stroke-width="1"/>
</svg>
<div class="badge" style="background:#1f8c7e"><span>TABLE</span></div><div class="t" style="left:17px;top:149.70px;font-size:13px;line-height:15.6px;color:#3a3a3a;font-weight:400;letter-spacing:0.3px;">Пошаговая инструкция</div><div class="t" style="left:17px;top:167.70px;font-size:13px;line-height:15.6px;color:#3a3a3a;font-weight:400;letter-spacing:0.25px;">по работе № 20-1088...</div></div>
<div style="position:absolute;left:307px;top:1077px;width:604px;height:64px;border:1px solid #c6dcef;border-radius:4px"></div>
<svg style="position:absolute;left:334px;top:1098px" width="16" height="24" viewBox="0 0 16 24" fill="none" stroke="#0b4d9b" stroke-width="2.3" stroke-linecap="round" stroke-linejoin="round"><path d="M11.5 3.8 L4.8 11.7 L11.5 19.5"/></svg>
<svg style="position:absolute;left:869px;top:1098px" width="16" height="24" viewBox="0 0 16 24" fill="none" stroke="#0b4d9b" stroke-width="2.3" stroke-linecap="round" stroke-linejoin="round"><path d="M5 3.8 L11.7 11.7 L5 19.5"/></svg>
<div style="position:absolute;left:474px;top:1091.5px;width:41.5px;height:36.5px;background:#ebeef3;border-radius:3px"></div>
<div class="t" style="left:475px;width:40px;text-align:center;top:1101.76px;font-size:16px;line-height:18px;color:#0b4d9b;font-weight:700">1</div>
<div class="t" style="left:534.5px;width:40px;text-align:center;top:1101.76px;font-size:16px;line-height:18px;color:#333;font-weight:400">2</div>
<div class="t" style="left:592px;width:40px;text-align:center;top:1101.76px;font-size:16px;line-height:18px;color:#333;font-weight:400">3</div>
<div class="t" style="left:649.5px;width:40px;text-align:center;top:1101.76px;font-size:16px;line-height:18px;color:#333;font-weight:400">4</div>
<div class="t" style="left:707px;width:40px;text-align:center;top:1101.76px;font-size:16px;line-height:18px;color:#333;font-weight:400">5</div>
<div style="position:absolute;left:947px;top:1077px;width:606px;height:66px;background:#ebeef3;border-radius:4px"></div>
<svg style="position:absolute;left:1164.5px;top:1098.3px" width="24" height="24" viewBox="0 0 24 24" fill="none" stroke="#1a5aa5" stroke-width="1.25" stroke-linecap="round" stroke-linejoin="round"><path d="M12 2.2 A9.8 9.8 0 1 1 2.2 12"/></svg>
<div class="t" style="left:1207.5px;top:1102.28px;font-size:14.5px;line-height:17.4px;color:#0d4f9c;font-weight:400;letter-spacing:0.1px;">Показать еще (12)</div>
</body></html>
